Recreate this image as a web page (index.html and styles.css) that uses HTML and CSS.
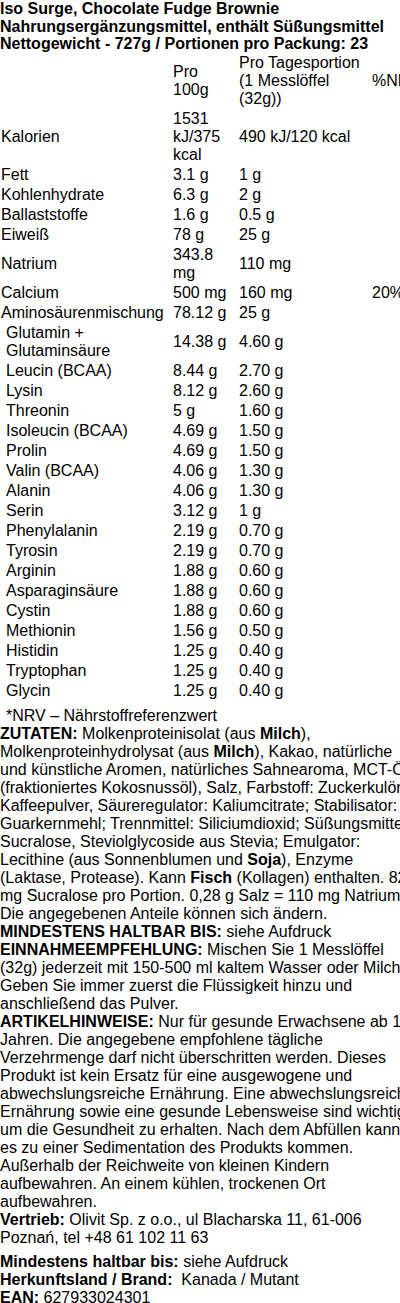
FILE: index.html
```html
<!DOCTYPE html>
<html>
<head>
<meta charset="utf-8">
<link rel="stylesheet" href="styles.css">
</head>
<body>

<div class="label">
    <div class="title">
        Iso Surge, Chocolate Fudge Brownie<br>
        Nahrungsergänzungsmittel, enthält Süßungsmittel<br>
        Nettogewicht - 727g / Portionen pro Packung: 23
    </div>

    <table class="facts">
        <colgroup>
            <col class="c-name">
            <col class="c-100">
            <col class="c-serving">
            <col class="c-nrv">
        </colgroup>
        <tr>
            <td></td>
            <td>Pro 100g</td>
            <td>Pro Tagesportion (1 Messlöffel (32g))</td>
            <td>%NRV*</td>
        </tr>
        <tr><td>Kalorien</td><td>1531 kJ/375 kcal</td><td>490 kJ/120 kcal</td><td></td></tr>
        <tr><td>Fett</td><td>3.1 g</td><td>1 g</td><td></td></tr>
        <tr><td>Kohlenhydrate</td><td>6.3 g</td><td>2 g</td><td></td></tr>
        <tr><td>Ballaststoffe</td><td>1.6 g</td><td>0.5 g</td><td></td></tr>
        <tr><td>Eiweiß</td><td>78 g</td><td>25 g</td><td></td></tr>
        <tr><td>Natrium</td><td>343.8 mg</td><td>110 mg</td><td></td></tr>
        <tr><td>Calcium</td><td>500 mg</td><td>160 mg</td><td>20%</td></tr>
        <tr><td>Aminosäurenmischung</td><td>78.12 g</td><td>25 g</td><td></td></tr>
        <tr><td class="sub">Glutamin + Glutaminsäure</td><td>14.38 g</td><td>4.60 g</td><td></td></tr>
        <tr><td class="sub">Leucin (BCAA)</td><td>8.44 g</td><td>2.70 g</td><td></td></tr>
        <tr><td class="sub">Lysin</td><td>8.12 g</td><td>2.60 g</td><td></td></tr>
        <tr><td class="sub">Threonin</td><td>5 g</td><td>1.60 g</td><td></td></tr>
        <tr><td class="sub">Isoleucin (BCAA)</td><td>4.69 g</td><td>1.50 g</td><td></td></tr>
        <tr><td class="sub">Prolin</td><td>4.69 g</td><td>1.50 g</td><td></td></tr>
        <tr><td class="sub">Valin (BCAA)</td><td>4.06 g</td><td>1.30 g</td><td></td></tr>
        <tr><td class="sub">Alanin</td><td>4.06 g</td><td>1.30 g</td><td></td></tr>
        <tr><td class="sub">Serin</td><td>3.12 g</td><td>1 g</td><td></td></tr>
        <tr><td class="sub">Phenylalanin</td><td>2.19 g</td><td>0.70 g</td><td></td></tr>
        <tr><td class="sub">Tyrosin</td><td>2.19 g</td><td>0.70 g</td><td></td></tr>
        <tr><td class="sub">Arginin</td><td>1.88 g</td><td>0.60 g</td><td></td></tr>
        <tr><td class="sub">Asparaginsäure</td><td>1.88 g</td><td>0.60 g</td><td></td></tr>
        <tr><td class="sub">Cystin</td><td>1.88 g</td><td>0.60 g</td><td></td></tr>
        <tr><td class="sub">Methionin</td><td>1.56 g</td><td>0.50 g</td><td></td></tr>
        <tr><td class="sub">Histidin</td><td>1.25 g</td><td>0.40 g</td><td></td></tr>
        <tr><td class="sub">Tryptophan</td><td>1.25 g</td><td>0.40 g</td><td></td></tr>
        <tr><td class="sub">Glycin</td><td>1.25 g</td><td>0.40 g</td><td></td></tr>
    </table>

    <div class="note">*NRV – Nährstoffreferenzwert</div>

    <div class="text">
        <b>ZUTATEN:</b> Molkenproteinisolat (aus <b>Milch</b>), Molkenproteinhydrolysat (aus <b>Milch</b>), Kakao, natürliche und künstliche Aromen, natürliches Sahnearoma, MCT-Öl (fraktioniertes Kokosnussöl), Salz, Farbstoff: Zuckerkulör, Kaffeepulver, Säureregulator: Kaliumcitrate; Stabilisator: Guarkernmehl; Trennmittel: Siliciumdioxid; Süßungsmittel: Sucralose, Steviolglycoside aus Stevia; Emulgator: Lecithine (aus Sonnenblumen und <b>Soja</b>), Enzyme (Laktase, Protease). Kann <b>Fisch</b> (Kollagen) enthalten. 82 mg Sucralose pro Portion. 0,28 g Salz = 110 mg Natrium. Die angegebenen Anteile können sich ändern.<br>
        <b>MINDESTENS HALTBAR BIS:</b> siehe Aufdruck<br>
        <b>EINNAHMEEMPFEHLUNG:</b> Mischen Sie 1 Messlöffel (32g) jederzeit mit 150-500 ml kaltem Wasser oder Milch. Geben Sie immer zuerst die Flüssigkeit hinzu und anschließend das Pulver.<br>
        <b>ARTIKELHINWEISE:</b> Nur für gesunde Erwachsene ab 18 Jahren. Die angegebene empfohlene tägliche Verzehrmenge darf nicht überschritten werden. Dieses Produkt ist kein Ersatz für eine ausgewogene und abwechslungsreiche Ernährung. Eine abwechslungsreiche Ernährung sowie eine gesunde Lebensweise sind wichtig, um die Gesundheit zu erhalten. Nach dem Abfüllen kann es zu einer Sedimentation des Produkts kommen. Außerhalb der Reichweite von kleinen Kindern aufbewahren. An einem kühlen, trockenen Ort aufbewahren.<br>
        <b>Vertrieb:</b> Olivit Sp. z o.o., ul Blacharska 11, 61-006 Poznań, tel +48 61 102 11 63
    </div>

    <div class="meta">
        <b>Mindestens haltbar bis:</b> siehe Aufdruck<br>
        <b>Herkunftsland / Brand:</b>&nbsp; Kanada / Mutant<br>
        <b>EAN:</b> 627933024301
    </div>
</div>

</body>
</html>
```

FILE: styles.css
```css
body {
    margin: 0;
    background: #FFFFFF;
    color: #000000;
    font-family: "Liberation Sans", Arial, sans-serif;
    font-size: 16px;
    line-height: 18px;
    overflow: hidden;
}

.label {
    width: 417px;
}

.title {
    font-weight: bold;
    line-height: 17.5px;
}

.facts {
    border-collapse: separate;
    border-spacing: 0;
    table-layout: fixed;
    width: 431px;
    font-size: 16px;
}

.facts td {
    padding: 1px;
    vertical-align: middle;
}

.c-name {
    width: 172px;
}

.c-100 {
    width: 66px;
}

.c-serving {
    width: 133px;
}

.c-nrv {
    width: 60px;
}

.facts td.sub {
    padding-left: 6px;
}

.note {
    margin-top: 6.5px;
    padding-left: 6px;
}

.meta {
    margin-top: 6px;
}
```
